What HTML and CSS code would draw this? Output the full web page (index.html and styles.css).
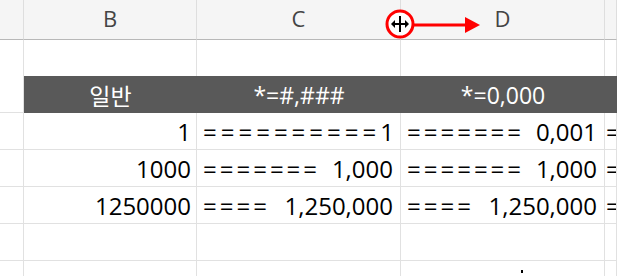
FILE: index.html
```html
<!DOCTYPE html>
<html lang="ko">
<head>
    <meta charset="UTF-8">
    <title>Repeat fill format</title>
    <link rel="stylesheet" href="styles.css">
</head>
<body>

    <div class="sheet">
        <!-- column letters -->
        <div class="col-head"></div>
        <div class="col-head">B</div>
        <div class="col-head">C</div>
        <div class="col-head">D</div>
        <div class="col-head last"></div>

        <!-- empty row -->
        <div class="cell blank"></div>
        <div class="cell blank"></div>
        <div class="cell blank"></div>
        <div class="cell blank"></div>
        <div class="cell blank last"></div>

        <!-- dark title row -->
        <div class="cell"></div>
        <div class="title">일반</div>
        <div class="title">*=#,###</div>
        <div class="title">*=0,000</div>
        <div class="title"></div>

        <!-- data -->
        <div class="cell"></div>
        <div class="cell num">1</div>
        <div class="cell fill"><span class="eq wide">==========</span><span>1</span></div>
        <div class="cell fill"><span class="eq">=======</span><span>0,001</span></div>
        <div class="cell fill last"><span class="eq">=</span></div>

        <div class="cell"></div>
        <div class="cell num">1000</div>
        <div class="cell fill"><span class="eq">=======</span><span>1,000</span></div>
        <div class="cell fill"><span class="eq">=======</span><span>1,000</span></div>
        <div class="cell fill last"><span class="eq">=</span></div>

        <div class="cell"></div>
        <div class="cell num">1250000</div>
        <div class="cell fill"><span class="eq">====</span><span>1,250,000</span></div>
        <div class="cell fill"><span class="eq">====</span><span>1,250,000</span></div>
        <div class="cell fill last"><span class="eq">=</span></div>

        <div class="cell"></div>
        <div class="cell"></div>
        <div class="cell"></div>
        <div class="cell"></div>
        <div class="cell last"></div>

        <div class="cell open"></div>
        <div class="cell open"></div>
        <div class="cell open"></div>
        <div class="cell open"><span class="dot"></span></div>
        <div class="cell open last"></div>
    </div>

    <!-- drag annotation -->
    <svg class="drag-mark" width="110" height="40" viewBox="0 0 110 40">
        <circle cx="15" cy="16" r="13" fill="#fff" stroke="#f00" stroke-width="3"/>
        <path d="M15 8v16M8 16h14" stroke="#000" stroke-width="2" fill="none"/>
        <path d="M6 16l4-4v8zM24 16l-4-4v8z" fill="#000"/>
        <path d="M28 17h54" stroke="#f00" stroke-width="3"/>
        <path d="M80 9l15 8-15 8z" fill="#f00"/>
    </svg>

</body>
</html>
```

FILE: styles.css
```css
body {
    margin: 0;
    height: 276px;
    font-family: "Open Sans", "Noto Sans CJK KR", sans-serif;
    background-color: white;
    overflow: hidden;
}

.sheet {
    display: grid;
    grid-template-columns: 24px 173px 204px 204px 1fr;
    grid-template-rows: 40px 36px 37px 37px 37px 37px 37px 15px;
    overflow: hidden;
}

/* Column letters */
.col-head {
    background-color: #f5f5f5;
    border-right: 1px solid #dedede;
    border-bottom: 1px solid #b8b8b8;
    color: #444;
    font-size: 22px;
    display: flex;
    align-items: center;
    justify-content: center;
    padding-bottom: 4px;
}

.cell {
    border-right: 1px solid #e1e1e1;
    border-bottom: 1px solid #e1e1e1;
    font-size: 24px;
    color: #000;
    display: flex;
    align-items: center;
    position: relative;
}
.cell.blank,
.cell.open {
    border-bottom: none;
}

.title {
    background-color: #595959;
    color: white;
    font-size: 23px;
    display: flex;
    align-items: center;
    justify-content: center;
}

.num {
    justify-content: flex-end;
    padding-right: 5px;
}

.fill {
    justify-content: space-between;
    padding: 0 7px 0 6px;
    white-space: pre;
}
.fill.last {
    padding: 0 0 0 1px;
    overflow: hidden;
}

.eq {
    letter-spacing: 3px;
}
.eq.wide {
    letter-spacing: 4px;
}

.dot {
    position: absolute;
    left: 120px;
    bottom: 3px;
    width: 2px;
    height: 3px;
    background: #000;
}

.drag-mark {
    position: absolute;
    left: 385px;
    top: 8px;
}
```
